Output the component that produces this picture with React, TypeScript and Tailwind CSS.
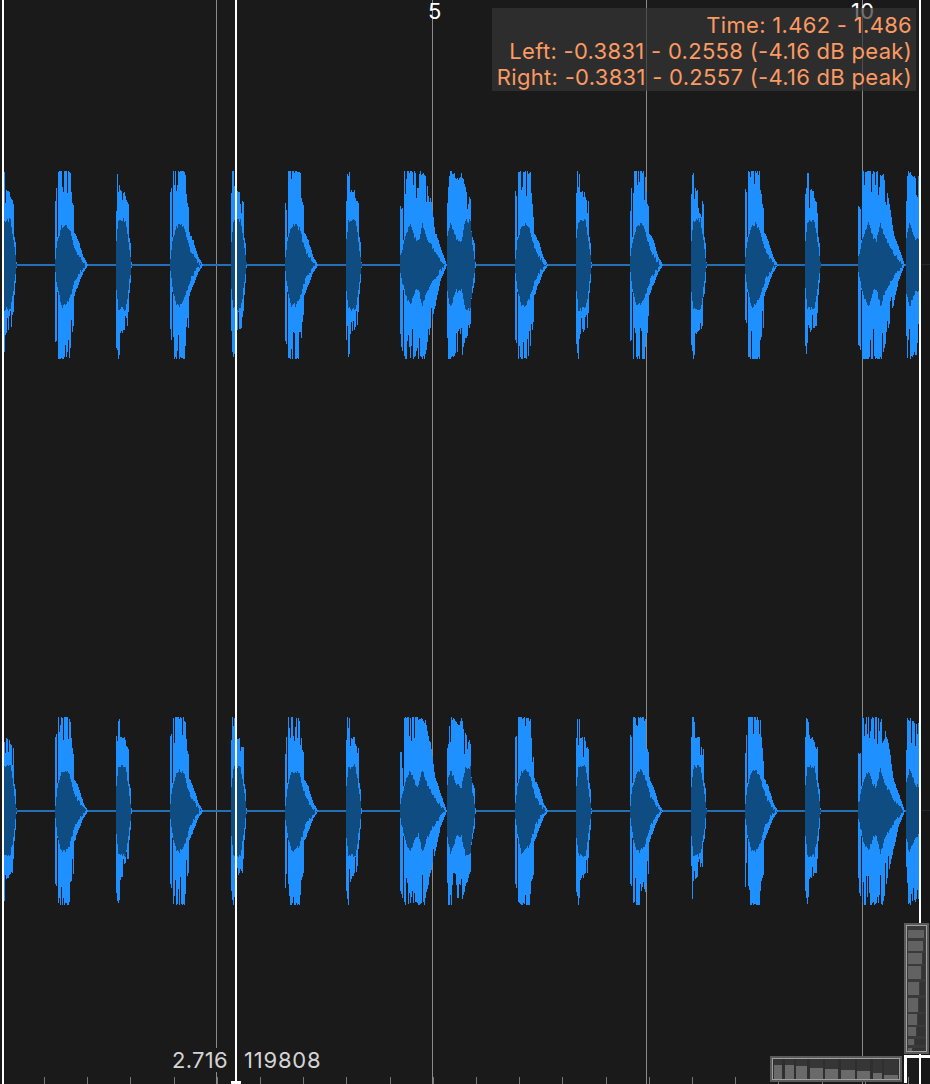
import React from "react";

type Pt = [number, number];
type Shape = { up: Pt[]; down: Pt[]; inUp: Pt[]; inDown: Pt[]; len: number; slits: number[] };

const A: Shape = {
  len: 33,
  slits: [2],
  up: [[0, 74], [2, 74], [3, 94], [10, 94], [15, 90], [16.5, 62], [18, 58], [19, 32], [23, 24], [28, 8], [32, 1], [33, 0]],
  down: [[0, 74], [2, 78], [3, 93], [14, 93], [16, 70], [18, 62], [19, 30], [22, 22], [28, 7], [32, 1], [33, 0]],
  inUp: [[0, 9], [2, 26], [6, 40], [10, 43], [14, 38], [17, 27], [20, 17], [25, 8], [32, 0], [33, 0]],
  inDown: [[0, 9], [2, 25], [6, 43], [10, 42], [14, 36], [17, 26], [20, 16], [25, 8], [32, 0], [33, 0]],
};
const B: Shape = {
  len: 16,
  slits: [],
  up: [[0, 72], [1, 92], [3, 90], [4, 74], [8, 72], [10, 64], [12, 62], [12.5, 30], [14, 22], [15, 3], [16, 0]],
  down: [[0, 80], [2, 93], [3, 87], [4, 68], [9, 62], [11.5, 60], [12.5, 34], [14, 18], [15, 3], [16, 0]],
  inUp: [[0, 27], [2, 46], [9, 47], [11, 34], [13, 18], [15, 3], [16, 0]],
  inDown: [[0, 27], [2, 46], [9, 46], [11, 34], [13, 18], [15, 3], [16, 0]],
};
const AA: Shape = {
  len: 47,
  slits: [3],
  up: [[0, 57], [3, 57], [4, 94], [20, 92], [25, 88], [31, 62], [35, 32], [40, 18], [46, 1], [47, 0]],
  down: [[0, 80], [3, 86], [4, 93], [24, 92], [30, 62], [34, 44], [40, 16], [46, 1], [47, 0]],
  inUp: [[0, 10], [5, 32], [10, 43], [15, 28], [18, 26], [22, 43], [27, 28], [35, 14], [46, 0], [47, 0]],
  inDown: [[0, 10], [5, 32], [10, 43], [15, 28], [18, 26], [22, 43], [27, 28], [35, 14], [46, 0], [47, 0]],
};
const BB: Shape = {
  len: 29,
  slits: [],
  up: [[0, 62], [1, 90], [5, 92], [11, 84], [14, 92], [18, 75], [23, 67], [24, 30], [27, 22], [28, 3], [29, 0]],
  down: [[0, 72], [1, 93], [5, 92], [11, 86], [14, 93], [18, 74], [23, 60], [24, 32], [27, 18], [28, 3], [29, 0]],
  inUp: [[0, 30], [3, 44], [9, 28], [14, 26], [18, 46], [23, 46], [25, 22], [28, 2], [29, 0]],
  inDown: [[0, 30], [3, 44], [9, 28], [14, 26], [18, 46], [23, 46], [25, 22], [28, 2], [29, 0]],
};

const BURSTS: [Shape, number][] = [
  [B, 1], [A, 55], [B, 116], [A, 170], [B, 231], [A, 285], [B, 346], [AA, 400], [BB, 447], [A, 515],
  [B, 576], [A, 630], [B, 691], [A, 745], [B, 805], [AA, 858], [BB, 906],
];

const env = (pts: Pt[], t: number) => {
  for (let i = 1; i < pts.length; i++) {
    if (t <= pts[i][0]) {
      const [a, va] = pts[i - 1];
      const [b, vb] = pts[i];
      return va + ((vb - va) * (t - a)) / (b - a);
    }
  }
  return 0;
};
const hash = (x: number, k: number) => {
  const s = Math.sin(x * 12.9898 + k * 78.233) * 43758.5453;
  return s - Math.floor(s);
};

function channel(cy: number, seed: number) {
  let outer = "";
  let inner = "";
  const maxAmp = 94;
  for (const [s, start] of BURSTS) {
    for (let t = 0; t < s.len; t++) {
      const x = start + t;
      if (x < 4 || x > 918) continue;
      let up = env(s.up, t);
      let dn = env(s.down, t);
      const iu = env(s.inUp, t);
      const id = env(s.inDown, t);
      const h1 = hash(x, seed + 1);
      const h2 = hash(x, seed + 2);
      const h5 = hash(x, seed + 5);
      if (up > 45) up *= h1 > 0.8 ? 0.72 + 0.22 * h2 : 0.98 + 0.06 * h2;
      else up *= 0.97 + 0.08 * h2;
      if (dn > 45) dn *= h5 > 0.72 ? 0.66 + 0.28 * h1 : 0.98 + 0.06 * h1;
      else dn *= 0.97 + 0.08 * h1;
      if (s.slits.includes(t)) {
        up = iu + 2;
        dn = id + 2;
      }
      up = Math.min(maxAmp, Math.max(up, iu));
      dn = Math.min(maxAmp, Math.max(dn, id));
      const a = Math.round(cy - up);
      const b = Math.round(cy + dn);
      if (b > a) outer += `M${x} ${a}h1V${b}h-1Z`;
      const n1 = hash(x, seed + 3) * 4;
      const n2 = hash(x, seed + 4) * 4;
      const c = Math.round(cy - Math.max(0, iu - n1));
      const d = Math.round(cy + Math.max(0, id - n2));
      if (d > c) inner += `M${x} ${c}h1V${d}h-1Z`;
    }
  }
  return { outer, inner };
}

const CH1 = channel(265, 0);
const CH2 = channel(811, 10);
const GRID = [216, 432, 646, 862];
const TICKS = Array.from({ length: 21 }, (_, i) => Math.round(44 + i * 43.2)).filter((x) => !GRID.includes(x));

const RIGHT_ROWS = [
  { h: 4, l: 0 }, { h: 8, l: 16 }, { h: 3, l: 0 }, { h: 10, l: 15 }, { h: 2, l: 0 }, { h: 11, l: 14 }, { h: 2, l: 0 },
  { h: 13, l: 13 }, { h: 3, l: 0 }, { h: 13, l: 11 }, { h: 3, l: 0 }, { h: 14, l: 10 }, { h: 2, l: 0 }, { h: 11, l: 9 },
  { h: 2, l: 0 }, { h: 9, l: 8 }, { h: 3, l: 0 }, { h: 6, l: 6 }, { h: 3, l: 0 }, { h: 3, l: 4 },
];
const BOTTOM_COLS = [
  { w: 8, t: 6 }, { w: 9, t: 6 }, { w: 11, t: 7 }, { w: 13, t: 9 }, { w: 13, t: 10 }, { w: 14, t: 11 }, { w: 13, t: 12 },
  { w: 9, t: 14 }, { w: 14, t: 16 },
];

function RightMap() {
  return (
    <div className="absolute left-[904px] top-[923px] h-[131px] w-[25px] border-2 border-[#5a5a5a]">
      <div className="flex h-full flex-col overflow-hidden border border-[#a0a0a0] bg-[#3a3a3a] px-[1px]">
        {RIGHT_ROWS.map((r, i) => (
          <div key={i} className="flex shrink-0 gap-[1px]" style={{ height: r.h }}>
            {r.l > 0 ? (
              <>
                <div className="bg-[#626262]" style={{ width: r.l }} />
                <div className="flex-1 bg-[#333333]" />
              </>
            ) : (
              <div className="flex-1 bg-[#3a3a3a]" />
            )}
          </div>
        ))}
      </div>
    </div>
  );
}

function BottomMap() {
  return (
    <div className="absolute left-[770px] top-[1056px] h-[26px] w-[132px] border-2 border-[#5a5a5a]">
      <div className="flex h-full gap-[2.5px] overflow-hidden border border-[#a0a0a0] bg-[#2f2f2f] pl-[1px]">
        {BOTTOM_COLS.map((c, i) => (
          <div key={i} className="flex shrink-0 flex-col" style={{ width: c.w }}>
            <div className="bg-[#363636]" style={{ height: c.t }} />
            <div className="flex-1 bg-[#6a6a6a]" />
          </div>
        ))}
      </div>
    </div>
  );
}

export default function App() {
  return (
    <div
      className="relative h-[1084px] w-[930px] overflow-hidden bg-[#1a1a1a] tracking-[0.3px]"
      style={{ fontFamily: "Inter, 'Liberation Sans', sans-serif" }}
    >
      <svg width="930" height="1084" viewBox="0 0 930 1084" className="block" shapeRendering="crispEdges">
        <rect x="921" y="0" width="9" height="1084" fill="#171717" />
        {GRID.map((x) => (
          <rect key={x} x={x} y="0" width="1" height="1084" fill="#8a8a8a" />
        ))}
        {TICKS.map((x) => (
          <rect key={x} x={x} y="1077" width="1" height="7" fill="#777777" />
        ))}
        {[265, 811].map((cy) => (
          <g key={cy}>
            <rect x="4" y={cy - 1} width="915" height="2" fill="#2370b8" />
            <rect x="921" y={cy - 1} width="9" height="1" fill="#1b2a3a" />
          </g>
        ))}
        {[CH1, CH2].map((c, i) => (
          <g key={i}>
            <path d={c.outer} fill="#1e90ff" />
            <path d={c.inner} fill="#0f4c81" />
          </g>
        ))}
        <rect x="2" y="0" width="2" height="1084" fill="#ffffff" />
        <rect x="235" y="0" width="2" height="1084" fill="#ffffff" />
        <rect x="919" y="0" width="2" height="1084" fill="#ffffff" />
        <path d="M231 1081h4v-2h2v2h4v3h-10Z" fill="#ffffff" />
      </svg>

      <span className="absolute left-[428px] top-[1px] text-[22px] leading-[21px] text-white">5</span>
      <span className="absolute left-[851px] top-[1px] text-[22px] leading-[21px] text-white">10</span>

      <div className="absolute left-[492px] top-[8px] flex h-[83px] w-[424px] flex-col items-end bg-[#363636]/70 pr-[4px] pt-[4px] text-[22px] leading-[26px] text-[#fb9a62]">
        <span>Time: 1.462 - 1.486</span>
        <span>Left: -0.3831 - 0.2558 (-4.16 dB peak)</span>
        <span>Right: -0.3831 - 0.2557 (-4.16 dB peak)</span>
      </div>

      <div className="absolute left-[168px] top-[1048px] flex h-[24px] w-[66px] items-center justify-end bg-[#1a1a1a] pr-[6px] text-[22px] text-[#d4d4d4]">
        2.716
      </div>
      <div className="absolute left-[244px] top-[1048px] flex h-[24px] items-center text-[22px] tracking-[0.8px] text-[#d4d4d4]">
        119808
      </div>

      <RightMap />
      <BottomMap />

      <div className="absolute left-[904px] top-[1055px] h-[28px] w-[26px] border-l-[3px] border-t-[3px] border-white" />
    </div>
  );
}
